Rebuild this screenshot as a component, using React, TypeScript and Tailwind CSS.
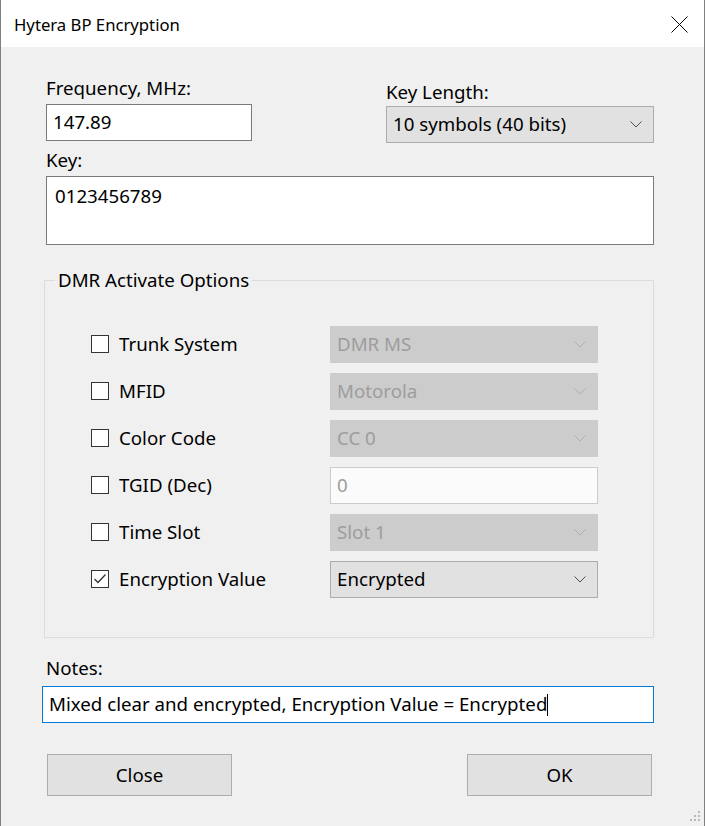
import React from "react";

const font = { fontFamily: '"Noto Sans", "Open Sans", sans-serif' };

function Chevron({ color = "#606060" }: { color?: string }) {
  return (
    <svg width="12" height="7" viewBox="0 0 12 7" className="shrink-0">
      <path d="M0.5 0.5 L6 6 L11.5 0.5" fill="none" stroke={color} strokeWidth="1" />
    </svg>
  );
}

function Select({ value, disabled }: { value: string; disabled?: boolean }) {
  return (
    <div
      className={
        disabled
          ? "h-[37px] w-[268px] bg-[#cccccc] border border-[#cccccc] flex items-center justify-between pl-[6px] pr-[11px] text-[#9d9d9d]"
          : "h-[37px] w-[268px] bg-[#e1e1e1] border border-[#adadad] flex items-center justify-between pl-[6px] pr-[11px] text-black"
      }
    >
      <span>{value}</span>
      <Chevron color={disabled ? "#b0b0b0" : "#505050"} />
    </div>
  );
}

function Check({ checked }: { checked?: boolean }) {
  return (
    <div className="w-[18px] h-[18px] border border-[#333333] bg-white flex items-center justify-center">
      {checked && (
        <svg width="14" height="14" viewBox="0 0 14 14">
          <path d="M1.5 7 L5 10.5 L12.5 2.5" fill="none" stroke="#333333" strokeWidth="1.3" />
        </svg>
      )}
    </div>
  );
}

const rows = [
  { label: "Trunk System", value: "DMR MS", kind: "select" },
  { label: "MFID", value: "Motorola", kind: "select" },
  { label: "Color Code", value: "CC 0", kind: "select" },
  { label: "TGID (Dec)", value: "0", kind: "input" },
  { label: "Time Slot", value: "Slot 1", kind: "select" },
  { label: "Encryption Value", value: "Encrypted", kind: "active", checked: true },
];

export default function App() {
  return (
    <div
      className="w-[705px] h-[826px] border-x border-[#808080] bg-[#f0f0f0] flex flex-col text-[18.7px] text-black"
      style={font}
    >
      {/* title bar */}
      <div className="h-[47px] bg-white flex items-center justify-between pl-[13px] pr-[16px] pt-[2px] shrink-0">
        <span className="text-[16.7px]">Hytera BP Encryption</span>
        <svg width="17" height="17" viewBox="0 0 17 17">
          <path d="M0.5 0.5 L16.5 16.5 M16.5 0.5 L0.5 16.5" stroke="#000" strokeWidth="1" />
        </svg>
      </div>

      <div className="relative flex-1 pl-[45px] pr-[50px] pt-[29px]">
        <div className="flex justify-between">
          <div className="flex flex-col w-[206px]">
            <div className="h-[24px] leading-[24px]">Frequency, MHz:</div>
            <div className="mt-[4px] h-[37px] bg-white border border-[#7a7a7a] flex items-center pl-[6px]">
              147.89
            </div>
          </div>
          <div className="flex flex-col w-[268px] pt-[4px]">
            <div className="h-[24px] leading-[24px]">Key Length:</div>
            <div className="mt-[2px]">
              <Select value="10 symbols (40 bits)" />
            </div>
          </div>
        </div>

        <div className="mt-[5px] h-[24px] leading-[24px]">Key:</div>
        <div className="mt-[4px] h-[69px] bg-white border border-[#7a7a7a] px-[8px] pt-[5px]">0123456789</div>

        <fieldset className="mt-[23px] -ml-[2px] border border-[#dcdcdc] p-0">
          <legend className="ml-[10px] px-[3px] h-[24px] leading-[24px]">DMR Activate Options</legend>
          <div className="pt-[34px] pb-[39px] pl-[46px] flex flex-col gap-[10px]">
            {rows.map((r) => (
              <div key={r.label} className="flex items-center">
                <div className="w-[239px] flex items-center gap-[10px]">
                  <Check checked={r.checked} />
                  <span>{r.label}</span>
                </div>
                {r.kind === "input" ? (
                  <div className="h-[37px] w-[268px] bg-[#fbfbfb] border border-[#cccccc] flex items-center pl-[6px] text-[#9d9d9d]">
                    {r.value}
                  </div>
                ) : (
                  <Select value={r.value} disabled={r.kind === "select"} />
                )}
              </div>
            ))}
          </div>
        </fieldset>

        <div className="mt-[18px] h-[24px] leading-[24px]">Notes:</div>
        <div className="mt-[6px] -ml-[4px] h-[37px] bg-white border border-[#0078d7] flex items-center pl-[6px]">
          <span>Mixed clear and encrypted, Encryption Value = Encrypted</span>
          <span className="w-[1px] h-[22px] bg-black" />
        </div>

        <div className="mt-[31px] flex justify-between pl-[1px] pr-[2px]">
          <button className="w-[185px] h-[42px] bg-[#e1e1e1] border border-[#adadad]">Close</button>
          <button className="w-[185px] h-[42px] bg-[#e1e1e1] border border-[#adadad]">OK</button>
        </div>

        <svg width="12" height="12" viewBox="0 0 12 12" className="absolute right-[2px] bottom-[3px]">
          <g fill="#b8b8b8">
            <rect x="8" y="0" width="2" height="2" />
            <rect x="4" y="4" width="2" height="2" />
            <rect x="8" y="4" width="2" height="2" />
            <rect x="0" y="8" width="2" height="2" />
            <rect x="4" y="8" width="2" height="2" />
            <rect x="8" y="8" width="2" height="2" />
          </g>
        </svg>
      </div>
    </div>
  );
}
